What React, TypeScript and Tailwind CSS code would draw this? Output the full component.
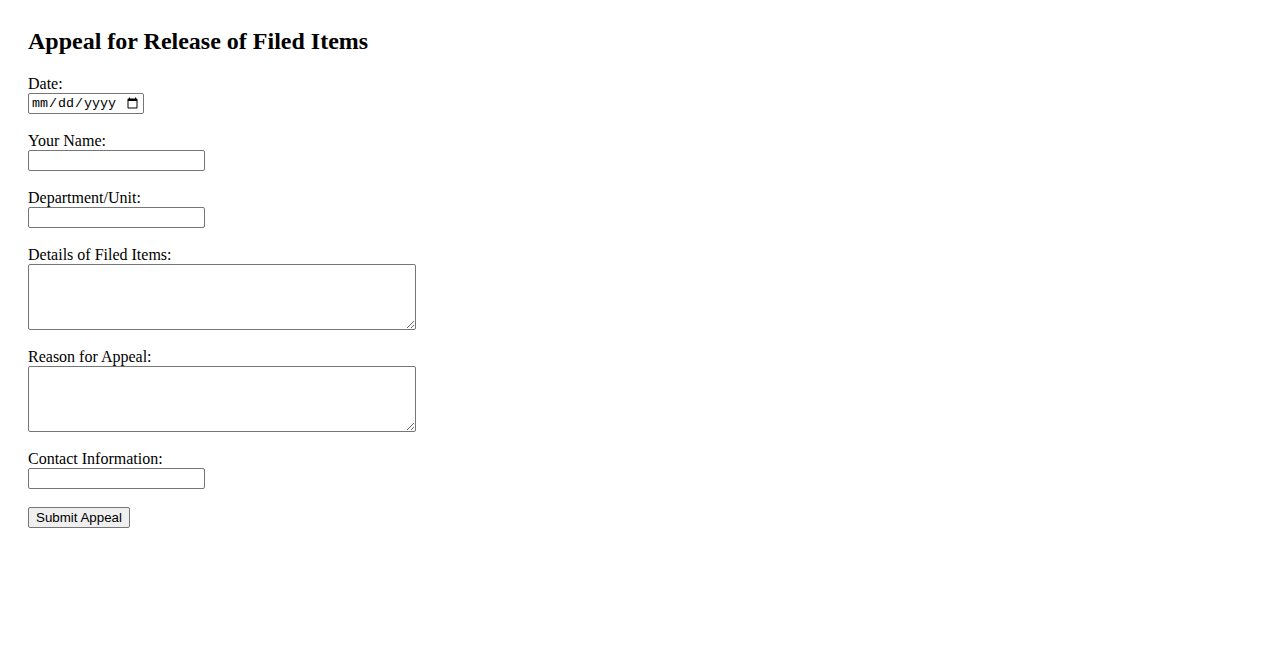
import { useState } from "react";

const inputClass =
    "block h-[21px] w-[177px] border border-[#767676] rounded-[2px] bg-white px-[2px] py-[1px] text-[13.33px] font-['Liberation_Sans',Arial,sans-serif] focus:outline-none";
const areaClass =
    "block h-[66px] w-[388px] border border-[#767676] rounded-[2px] bg-white px-[2px] py-[2px] text-[13.33px] font-['Liberation_Mono',monospace] focus:outline-none";
const labelClass = "block leading-[18px]";

export default function App() {
    const [form, setForm] = useState({
        date: "", name: "", department: "", details: "", reason: "", contact: ""
    });

    const update = (e: React.ChangeEvent<HTMLInputElement | HTMLTextAreaElement>) => {
        const { name, value } = e.target;
        setForm({ ...form, [name]: value });
    };

    return (
        <div className="min-h-[650px] bg-white text-black font-['Liberation_Serif','Times_New_Roman',serif] text-[16px] pl-[28px] pt-[28px]">
            <h2 className="text-[24px] font-bold leading-[27.6px] mb-[19.9px]">Appeal for Release of Filed Items</h2>
            <form onSubmit={(e) => e.preventDefault()}>
                <div className="mb-[18px]">
                    <label htmlFor="date" className={labelClass}>Date:</label>
                    <input
                        id="date"
                        type="date"
                        name="date"
                        value={form.date}
                        onChange={update}
                        className="block h-[21px] w-[116px] border border-[#767676] rounded-[2px] bg-white px-[2px] py-0 text-[13.33px] font-['Liberation_Mono',monospace] focus:outline-none"
                    />
                </div>
                <div className="mb-[18px]">
                    <label htmlFor="name" className={labelClass}>Your Name:</label>
                    <input id="name" type="text" name="name" value={form.name} onChange={update} className={inputClass} />
                </div>
                <div className="mb-[18px]">
                    <label htmlFor="department" className={labelClass}>Department/Unit:</label>
                    <input id="department" type="text" name="department" value={form.department} onChange={update} className={inputClass} />
                </div>
                <div className="mb-[18px]">
                    <label htmlFor="details" className={labelClass}>Details of Filed Items:</label>
                    <textarea id="details" name="details" value={form.details} onChange={update} className={areaClass} />
                </div>
                <div className="mb-[18px]">
                    <label htmlFor="reason" className={labelClass}>Reason for Appeal:</label>
                    <textarea id="reason" name="reason" value={form.reason} onChange={update} className={areaClass} />
                </div>
                <div className="mb-[18px]">
                    <label htmlFor="contact" className={labelClass}>Contact Information:</label>
                    <input id="contact" type="text" name="contact" value={form.contact} onChange={update} className={inputClass} />
                </div>
                <button
                    type="submit"
                    className="block h-[21px] w-[102px] border border-[#767676] rounded-[2px] bg-[#efefef] px-[6px] py-[1px] text-[13.33px] leading-[17px] font-['Liberation_Sans',Arial,sans-serif] hover:bg-[#e5e5e5]"
                >
                    Submit Appeal
                </button>
            </form>
        </div>
    );
}
